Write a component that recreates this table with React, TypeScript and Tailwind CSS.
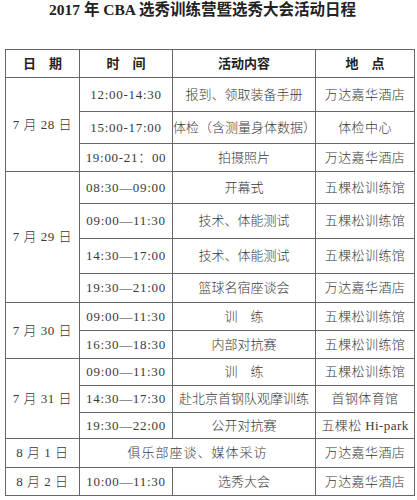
const cjk = "font-['Liberation_Serif','Noto_Sans_CJK_SC',serif]";

type Row = { time?: string; act: string; place: string; span?: boolean; h: string };
type Day = { date: string; rows: Row[] };

const days: Day[] = [
  {
    date: "7 月 28 日",
    rows: [
      { time: "12:00-14:30", act: "报到、领取装备手册", place: "万达嘉华酒店", h: "h-[34px]" },
      { time: "15:00-17:00", act: "体检（含测量身体数据）", place: "体检中心", h: "h-[32px]" },
      { time: "19:00-21：00", act: "拍摄照片", place: "万达嘉华酒店", h: "h-[28px]" },
    ],
  },
  {
    date: "7 月 29 日",
    rows: [
      { time: "08:30—09:00", act: "开幕式", place: "五棵松训练馆", h: "h-[32px]" },
      { time: "09:00—11:30", act: "技术、体能测试", place: "五棵松训练馆", h: "h-[35px]" },
      { time: "14:30—17:00", act: "技术、体能测试", place: "五棵松训练馆", h: "h-[35px]" },
      { time: "19:30—21:00", act: "篮球名宿座谈会", place: "万达嘉华酒店", h: "h-[29px]" },
    ],
  },
  {
    date: "7 月 30 日",
    rows: [
      { time: "09:00—11:30", act: "训　练", place: "五棵松训练馆", h: "h-[28px]" },
      { time: "16:30—18:30", act: "内部对抗赛", place: "五棵松训练馆", h: "h-[28px]" },
    ],
  },
  {
    date: "7 月 31 日",
    rows: [
      { time: "09:00—11:30", act: "训　练", place: "五棵松训练馆", h: "h-[27px]" },
      { time: "14:30—17:30", act: "赴北京首钢队观摩训练", place: "首钢体育馆", h: "h-[27px]" },
      { time: "19:30—22:00", act: "公开对抗赛", place: "五棵松 Hi-park", h: "h-[26px]" },
    ],
  },
  {
    date: "8 月 1 日",
    rows: [{ act: "俱乐部座谈、媒体采访", place: "万达嘉华酒店", span: true, h: "h-[29px]" }],
  },
  {
    date: "8 月 2 日",
    rows: [{ time: "10:00—11:30", act: "选秀大会", place: "万达嘉华酒店", h: "h-[28px]" }],
  },
];

const cell = "border border-[#666] text-center align-middle p-0";

export default function App() {
  return (
    <div className={`w-[417px] h-[500px] bg-white text-[#3a3a3a] ${cjk}`}>
      <h1 className="pt-0 pr-[12px] text-center text-[15.5px] leading-[20px] font-bold text-[#222]">
        2017 年 CBA 选秀训练营暨选秀大会活动日程
      </h1>
      <table className="mt-[29px] ml-[5px] w-[409px] table-fixed border-collapse text-[13px] leading-[16px] font-light">
        <colgroup>
          <col className="w-[74px]" />
          <col className="w-[93px]" />
          <col className="w-[143px]" />
          <col className="w-[99px]" />
        </colgroup>
        <thead>
          <tr className="h-[28px] font-bold text-[#222]">
            <th className={cell}>日　期</th>
            <th className={cell}>时　间</th>
            <th className={cell}>活动内容</th>
            <th className={cell}>地　点</th>
          </tr>
        </thead>
        <tbody>
          {days.map((d) =>
            d.rows.map((r, i) => (
              <tr key={d.date + i} className={r.h}>
                {i === 0 && (
                  <td className={`${cell} tracking-[0.5px]`} rowSpan={d.rows.length}>
                    {d.date}
                  </td>
                )}
                {r.span ? (
                  <td className={`${cell} tracking-[1px]`} colSpan={2}>
                    {r.act}
                  </td>
                ) : (
                  <>
                    <td className={`${cell} tracking-[0.7px] whitespace-nowrap`}>{r.time}</td>
                    <td className={`${cell} whitespace-nowrap`}>{r.act}</td>
                  </>
                )}
                <td className={`${cell} tracking-[0.4px] whitespace-nowrap`}>{r.place}</td>
              </tr>
            ))
          )}
        </tbody>
      </table>
    </div>
  );
}
